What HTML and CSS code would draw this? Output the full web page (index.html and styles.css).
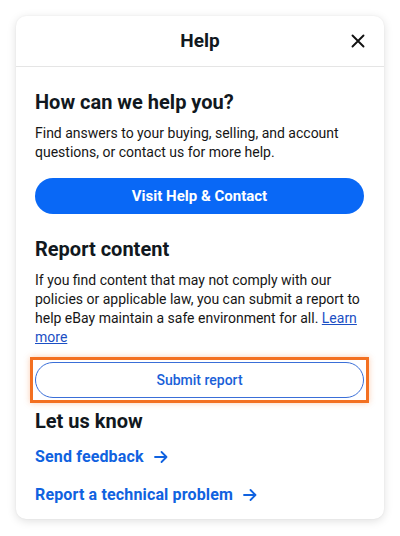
FILE: index.html
```html
<!DOCTYPE html>
<html lang="en">
<head>
<meta charset="utf-8">
<title>Help</title>
<link rel="stylesheet" href="styles.css">
</head>
<body>
<div class="card">
  <div class="header">
    <h1 class="title">Help</h1>
    <button class="close" aria-label="Close">
      <svg width="14" height="14" viewBox="0 0 14 14"><path d="M1.5 1.5L12.5 12.5M12.5 1.5L1.5 12.5" stroke="#111" stroke-width="1.9" stroke-linecap="round" fill="none"/></svg>
    </button>
  </div>
  <div class="content">
    <h2 class="h2 h2-first">How can we help you?</h2>
    <p class="text">Find answers to your buying, selling, and account questions, or contact us for more help.</p>
    <button class="btn-primary">Visit Help &amp; Contact</button>

    <h2 class="h2 h2-section">Report content</h2>
    <p class="text">If you find content that may not comply with our policies or applicable law, you can submit a report to help eBay maintain a safe environment for all. <a class="inline-link" href="#">Learn more</a></p>
    <div class="focus-ring">
      <button class="btn-secondary">Submit report</button>
    </div>

    <h2 class="h2 h2-last">Let us know</h2>
    <a class="action-link" href="#">Send feedback
      <svg class="arrow" width="14" height="14" viewBox="0 0 14 14"><path d="M1 7H12.5M7.5 2L12.5 7L7.5 12" stroke="currentColor" stroke-width="1.8" stroke-linecap="round" stroke-linejoin="round" fill="none"/></svg>
    </a>
    <a class="action-link" href="#">Report a technical problem
      <svg class="arrow" width="14" height="14" viewBox="0 0 14 14"><path d="M1 7H12.5M7.5 2L12.5 7L7.5 12" stroke="currentColor" stroke-width="1.8" stroke-linecap="round" stroke-linejoin="round" fill="none"/></svg>
    </a>
  </div>
</div>
</body>
</html>
```

FILE: styles.css
```css
* { box-sizing: border-box; }
html, body { margin: 0; padding: 0; background: #fff; }
body {
  padding: 16px;
  font-family: Roboto, Inter, "Liberation Sans", sans-serif;
  color: #111820;
}
.card {
  width: 368px;
  background: #fff;
  border-radius: 10px;
  box-shadow: 0 2px 10px rgba(0,0,0,0.13), 0 0 2px rgba(0,0,0,0.06);
}
.header {
  position: relative;
  height: 51px;
  border-bottom: 1px solid #e5e5e5;
  display: flex;
  align-items: center;
  justify-content: center;
}
.title {
  margin: 0;
  font-size: 19px;
  font-weight: 700;
  line-height: 24px;
}
.close {
  position: absolute;
  right: 18px;
  top: 17px;
  width: 16px;
  height: 16px;
  padding: 0;
  border: 0;
  background: none;
  display: flex;
  align-items: center;
  justify-content: center;
}
.content {
  padding: 23px 20px 12px 19px;
  display: flex;
  flex-direction: column;
}
.h2 {
  margin: 0;
  font-size: 20px;
  line-height: 24px;
  font-weight: 700;
}
.h2-section { margin-top: 23px; }
.h2-last { margin-top: 11px; }
.text {
  margin: 10px 0 0;
  font-size: 14px;
  line-height: 19px;
  color: #161616;
}
.inline-link {
  color: #1b4fc4;
  text-decoration: underline;
}
.btn-primary {
  margin-top: 16px;
  height: 36px;
  width: 100%;
  border: 0;
  border-radius: 18px;
  background: #0968f6;
  color: #fff;
  font-family: inherit;
  font-size: 15px;
  font-weight: 700;
}
.focus-ring {
  margin: 10px -5px -5px;
  padding: 2px;
  border: 3px solid #f37021;
  box-shadow: 0 0 6px rgba(243,112,33,0.35);
}
.btn-secondary {
  display: block;
  height: 36px;
  width: 100%;
  border: 1px solid #3a6fd8;
  border-radius: 18px;
  background: #fff;
  color: #1a5fd8;
  font-family: inherit;
  font-size: 14px;
  font-weight: 500;
}
.action-link {
  margin-top: 12px;
  display: flex;
  align-items: center;
  gap: 10px;
  font-size: 16px;
  line-height: 24px;
  font-weight: 700;
  letter-spacing: 0.15px;
  color: #1062e0;
  text-decoration: none;
}
.action-link + .action-link { margin-top: 14px; }
.arrow { flex: none; }
```
